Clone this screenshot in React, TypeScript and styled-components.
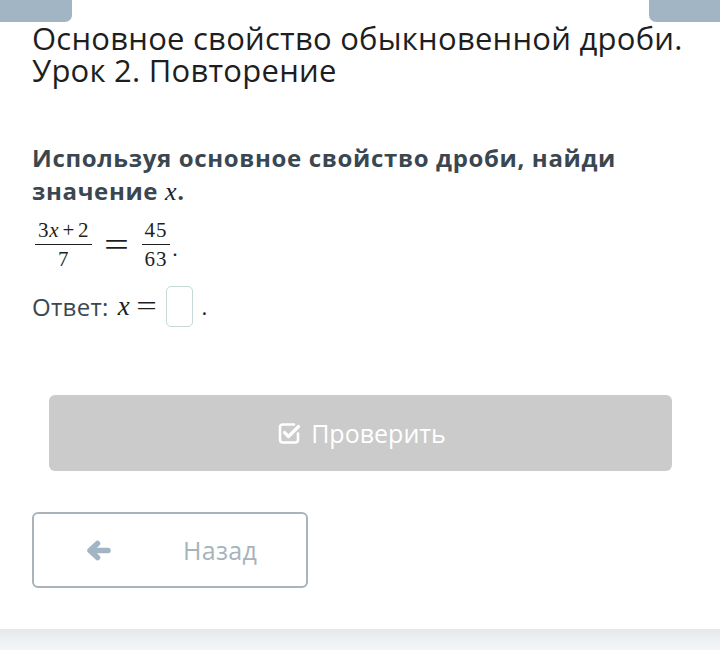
import React from 'react'
import styled, { createGlobalStyle } from 'styled-components'

const GlobalStyle = createGlobalStyle`
  html, body {
    margin: 0;
    padding: 0;
    background: #ffffff;
  }
  body {
    font-family: 'Open Sans', 'Noto Sans', sans-serif;
  }
`

const Page = styled.div`
  width: 720px;
  height: 650px;
  display: flex;
  flex-direction: column;
  overflow: hidden;
`

const Card = styled.div`
  flex: 0 0 629px;
  display: flex;
  flex-direction: column;
  background: #ffffff;
`

const TabBar = styled.div`
  display: flex;
  justify-content: space-between;
  height: 22px;
`

const Tab = styled.div<{ side: 'left' | 'right' }>`
  width: ${(p) => (p.side === 'left' ? '72px' : '71px')};
  height: 22px;
  background: #a1b5c4;
  border-radius: ${(p) => (p.side === 'left' ? '0 0 7px 0' : '0 0 0 7px')};
`

const Title = styled.h1`
  margin: 0 0 0 32px;
  font-size: 31px;
  line-height: 32px;
  letter-spacing: 0.25px;
  font-weight: 400;
  color: #1e1e1e;
`

const Question = styled.p`
  margin: 55px 32px 0 32px;
  font-size: 24px;
  line-height: 33px;
  letter-spacing: 0.65px;
  font-weight: 700;
  color: #3b4750;
`

const MathVar = styled.span`
  font-family: 'Liberation Serif', 'DejaVu Serif', serif;
  font-style: italic;
  font-weight: 400;
  font-size: 26px;
  line-height: 20px;
  display: inline-block;
  color: #1e1e1e;
`

const Equation = styled.div`
  margin: 13px 0 0 35px;
  display: flex;
  align-items: center;
  font-family: 'Liberation Serif', 'DejaVu Serif', serif;
  color: #1e1e1e;
`

const Fraction = styled.span`
  display: inline-flex;
  flex-direction: column;
  align-items: stretch;
  text-align: center;
`

const Numer = styled.span`
  font-size: 21px;
  line-height: 20px;
  padding: 0 3px 4px;
  border-bottom: 1.5px solid #1e1e1e;
  letter-spacing: 0.8px;
`

const Denom = styled.span`
  font-size: 21px;
  line-height: 20px;
  padding-top: 4px;
  letter-spacing: 0.8px;
`

const Plus = styled.span`
  margin: 0 3px;
`

const Equals = styled.span`
  font-size: 34px;
  margin: 0 15px 0 15px;
  line-height: 1;
  transform: scaleX(1.3);
`

const Period = styled.span`
  font-size: 22px;
  align-self: center;
  margin: 8px 0 0 2px;
`

const AnswerRow = styled.div`
  margin: 16px 0 0 32px;
  display: flex;
  align-items: center;
  font-size: 24px;
  letter-spacing: 0.3px;
  color: #3b4750;
  height: 42px;
`

const AnswerMath = styled.span`
  font-family: 'Liberation Serif', 'DejaVu Serif', serif;
  color: #1e1e1e;
  font-size: 27px;
  margin-left: 9px;
  display: flex;
  align-items: center;
`

const EqSign = styled.span`
  margin: 0 0 0 9px;
  transform: scaleX(1.35);
  display: inline-block;
`

const AnswerBox = styled.span`
  width: 25px;
  height: 39px;
  border: 1.5px solid #c5d9d6;
  border-radius: 5px;
  margin-left: 12px;
`

const AnswerDot = styled.span`
  margin-left: 8px;
  font-size: 22px;
  color: #1e1e1e;
`

const CheckButton = styled.button`
  margin: 68px 48px 0 49px;
  height: 76px;
  border: none;
  border-radius: 6px;
  background: #cbcbcb;
  color: #ffffff;
  font-family: 'Open Sans', 'Noto Sans', sans-serif;
  font-size: 25px;
  display: flex;
  align-items: center;
  justify-content: center;
  gap: 9px;
  padding: 0 0 0 2px;
`

const BackButton = styled.button`
  margin: 41px 0 0 32px;
  width: 276px;
  height: 76px;
  box-sizing: border-box;
  border: 2px solid #a9b3b9;
  border-radius: 6px;
  background: #ffffff;
  color: #a6b4be;
  font-family: 'Open Sans', 'Noto Sans', sans-serif;
  font-size: 25px;
  letter-spacing: 0.3px;
  display: flex;
  align-items: center;
  padding: 0 0 0 52px;
`

const BackLabel = styled.span`
  margin-left: 72px;
`

const Footer = styled.div`
  flex: 1;
  background: linear-gradient(to bottom, #e5e8eb 0%, #eef2f5 60%, #f2f6f9 100%);
`

const CheckSquareIcon = () => (
  <svg width="25" height="24" viewBox="0 0 25 24" fill="none">
    <path
      d="M17 3.5H5.5a2.5 2.5 0 0 0-2.5 2.5v13a2.5 2.5 0 0 0 2.5 2.5h13a2.5 2.5 0 0 0 2.5-2.5v-6.5"
      stroke="#ffffff"
      strokeWidth="2.6"
      strokeLinecap="round"
    />
    <path d="M7.5 11.5l4 4 10-10" stroke="#ffffff" strokeWidth="3.2" strokeLinecap="round" strokeLinejoin="round" />
  </svg>
)

const ArrowLeftIcon = () => (
  <svg width="25" height="21" viewBox="0 0 25 21" fill="none">
    <path d="M22 10.5H6" stroke="#a1b5c4" strokeWidth="5.5" strokeLinecap="round" />
    <path d="M11.5 3.5l-7.5 7 7.5 7" stroke="#a1b5c4" strokeWidth="5.5" strokeLinecap="round" strokeLinejoin="round" />
  </svg>
)

export default function App() {
  return (
    <Page>
      <GlobalStyle />
      <Card>
        <TabBar>
          <Tab side="left" />
          <Tab side="right" />
        </TabBar>
        <Title>
          Основное свойство обыкновенной дроби.
          <br />
          Урок 2. Повторение
        </Title>
        <Question>
          Используя основное свойство дроби, найди значение <MathVar>x</MathVar>.
        </Question>
        <Equation>
          <Fraction>
            <Numer>
              3<i>x</i>
              <Plus>+</Plus>2
            </Numer>
            <Denom>7</Denom>
          </Fraction>
          <Equals>=</Equals>
          <Fraction>
            <Numer>45</Numer>
            <Denom>63</Denom>
          </Fraction>
          <Period>.</Period>
        </Equation>
        <AnswerRow>
          Ответ:
          <AnswerMath>
            <i>x</i>
            <EqSign>=</EqSign>
          </AnswerMath>
          <AnswerBox />
          <AnswerDot>.</AnswerDot>
        </AnswerRow>
        <CheckButton>
          <CheckSquareIcon />
          Проверить
        </CheckButton>
        <BackButton>
          <ArrowLeftIcon />
          <BackLabel>Назад</BackLabel>
        </BackButton>
      </Card>
      <Footer />
    </Page>
  )
}
